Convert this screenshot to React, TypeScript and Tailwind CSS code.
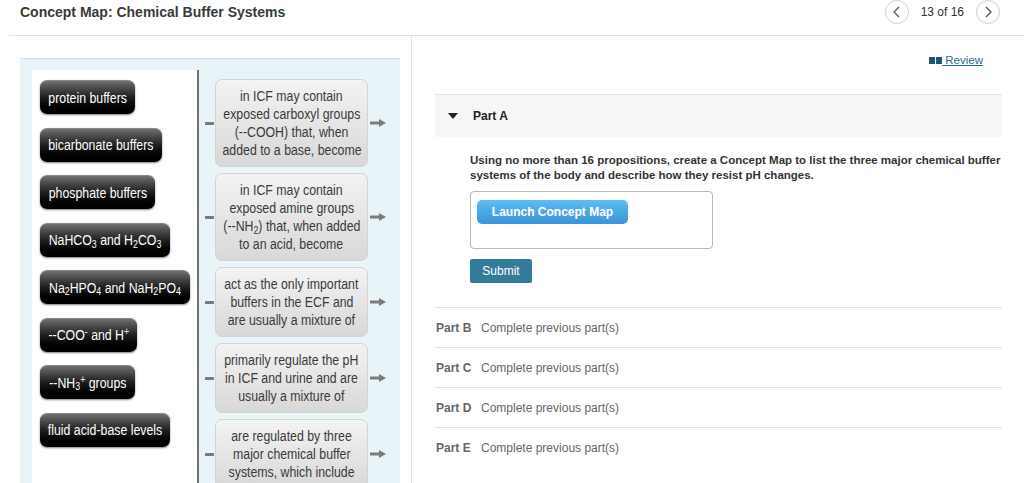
import React from "react";

function N({ children }: { children: React.ReactNode }) {
  return <span className="inline-block whitespace-nowrap scale-x-[0.88] origin-center">{children}</span>;
}

function Pill({ w, children }: { w: number; children: React.ReactNode }) {
  return (
    <div className="self-start h-[34px] flex items-center justify-center rounded-[7px] bg-gradient-to-b from-[#707070] via-[#1e1e1e] to-black text-white text-[14px] leading-none shadow-[0_1px_2px_rgba(0,0,0,0.5)] border-t border-[#8a8a8a]" style={{ width: w }}>
      <N>{children}</N>
    </div>
  );
}

function Arrow() {
  return (
    <svg width="16" height="10" viewBox="0 0 16 10" className="ml-[2px]">
      <line x1="0" y1="5" x2="10" y2="5" stroke="#7b7b7b" strokeWidth="3" />
      <polygon points="9,1 16,5 9,9" fill="#7b7b7b" />
    </svg>
  );
}

function Box({ lines }: { lines: React.ReactNode[] }) {
  return (
    <div className="flex items-center">
      <div className="ml-[6px] w-[9px] h-[3px] bg-[#7b7b7b]" />
      <div className="ml-[1px] w-[153px] rounded-[7px] border border-[#d4d4d4] bg-gradient-to-b from-[#f3f3f3] to-[#d8d8d8] py-[7px] text-[14px] leading-[18px] text-[#3a3a3a]">
        {lines.map((l, i) => (
          <div key={i} className="flex justify-center">
            <N>{l}</N>
          </div>
        ))}
      </div>
      <Arrow />
    </div>
  );
}

function Chevron({ dir }: { dir: "l" | "r" }) {
  return (
    <div className="w-[24px] h-[24px] rounded-full border border-[#cfcfcf] flex items-center justify-center">
      <svg width="10" height="12" viewBox="0 0 10 12">
        <polyline points={dir === "l" ? "7,1 2,6 7,11" : "3,1 8,6 3,11"} fill="none" stroke="#555" strokeWidth="1.3" />
      </svg>
    </div>
  );
}

function PartRow({ label }: { label: string }) {
  return (
    <div className="h-[40px] border-t border-[#e3e3e3] flex items-center text-[12px] text-[#666]">
      <span className="w-[46px] pl-[1px] font-bold">{label}</span>
      <span>Complete previous part(s)</span>
    </div>
  );
}

export default function App() {
  return (
    <div className="w-[1024px] h-[483px] overflow-hidden bg-white flex flex-col" style={{ fontFamily: "'Liberation Sans', Arial, sans-serif" }}>
      <div className="h-[36px] ml-[9px] border-b border-[#e2e2e2] flex justify-between shrink-0">
        <div className="pl-[11px] pt-[2px] text-[14px] font-bold text-[#3a3a3a]">Concept Map: Chemical Buffer Systems</div>
        <div className="flex items-start gap-[12px] pr-[24px]">
          <Chevron dir="l" />
          <span className="text-[12px] text-[#333] leading-[24px]">13 of 16</span>
          <Chevron dir="r" />
        </div>
      </div>
      <div className="flex flex-1 min-h-0">
        <div className="w-[411px] shrink-0 pl-[20px] pt-[22px]">
          <div className="w-[380px] h-full bg-[#e9f4f8] border-t border-[#d3dce0] pl-[12px] pt-[11px] flex">
            <div className="w-[165px] bg-white pl-[8px] pt-[10px] flex flex-col gap-[13.5px]">
              <Pill w={95}>protein buffers</Pill>
              <Pill w={122}>bicarbonate buffers</Pill>
              <Pill w={115}>phosphate buffers</Pill>
              <Pill w={130}>NaHCO<sub className="text-[10px]">3</sub> and H<sub className="text-[10px]">2</sub>CO<sub className="text-[10px]">3</sub></Pill>
              <Pill w={150}>Na<sub className="text-[10px]">2</sub>HPO<sub className="text-[10px]">4</sub> and NaH<sub className="text-[10px]">2</sub>PO<sub className="text-[10px]">4</sub></Pill>
              <Pill w={97}>--COO<sup className="text-[10px]">-</sup> and H<sup className="text-[10px]">+</sup></Pill>
              <Pill w={95}>--NH<sub className="text-[10px]">3</sub><sup className="text-[10px]">+</sup> groups</Pill>
              <Pill w={130}>fluid acid-base levels</Pill>
            </div>
            <div className="border-l-2 border-[#727272] pt-[9px] flex flex-col gap-[6px]">
              <Box lines={["in ICF may contain", "exposed carboxyl groups", "(--COOH) that, when", "added to a base, become"]} />
              <Box lines={["in ICF may contain", "exposed amine groups", <>(--NH<sub className="text-[10px]">2</sub>) that, when added</>, "to an acid, become"]} />
              <Box lines={["act as the only important", "buffers in the ECF and", "are usually a mixture of"]} />
              <Box lines={["primarily regulate the pH", "in ICF and urine and are", "usually a mixture of"]} />
              <Box lines={["are regulated by three", "major chemical buffer", "systems, which include"]} />
            </div>
          </div>
        </div>
        <div className="flex-1 min-w-0 border-l border-[#e2e2e2] pl-[23px] pr-[22px]">
          <div className="flex justify-end pt-[17px] pr-[19px]">
            <a className="flex items-center text-[11.5px] leading-[14px] text-[#1f6d90] underline">
              <svg width="13" height="9" viewBox="0 0 13 9">
                <rect x="0" y="1" width="6" height="7" fill="#1d5672" />
                <rect x="7" y="1" width="6" height="7" fill="#1d5672" />
              </svg>
              <span>&nbsp;Review</span>
            </a>
          </div>
          <div className="mt-[27px] h-[43px] bg-[#f6f6f6] border-t border-[#e2e2e2] flex items-center pl-[13px]">
            <svg width="10" height="6" viewBox="0 0 10 6">
              <polygon points="0,0 10,0 5,6" fill="#222" />
            </svg>
            <span className="ml-[15px] text-[12px] font-bold text-[#222]">Part A</span>
          </div>
          <div className="pl-[35px] pt-[16px]">
            <p className="w-[532px] text-[11.5px] leading-[15px] font-bold text-[#333]">
              Using no more than 16 propositions, create a Concept Map to list the three major chemical buffer systems of the body and describe how they resist pH changes.
            </p>
            <div className="mt-[8px] w-[243px] h-[58px] border border-[#b9b9b9] rounded-[4px] pl-[6px] pt-[7px]">
              <button className="h-[24px] w-[151px] rounded-[5px] bg-gradient-to-b from-[#5dbcf5] to-[#3c93d8] text-white text-[12px] font-bold">Launch Concept Map</button>
            </div>
            <button className="mt-[10px] h-[24px] w-[62px] rounded-[2px] bg-[#337b98] text-white text-[12px]">Submit</button>
          </div>
          <div className="mt-[24px]">
            <PartRow label="Part B" />
            <PartRow label="Part C" />
            <PartRow label="Part D" />
            <PartRow label="Part E" />
          </div>
        </div>
      </div>
    </div>
  );
}
